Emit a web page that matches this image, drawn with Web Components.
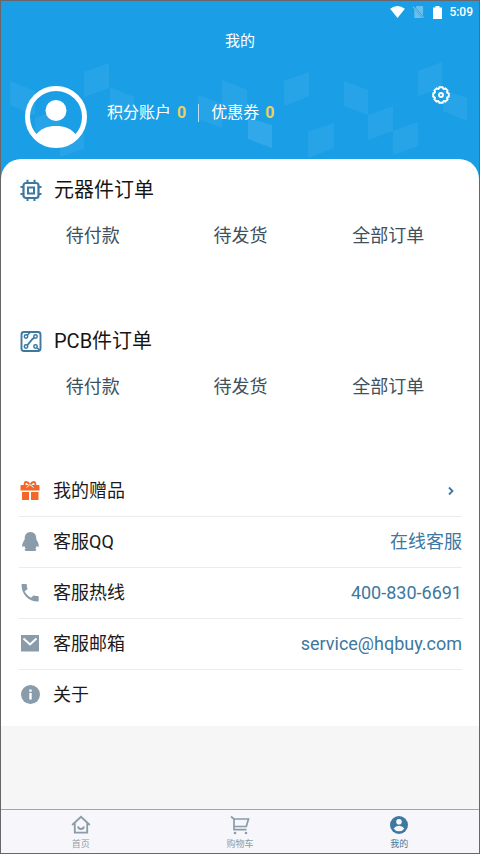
<!DOCTYPE html>
<html lang="zh-CN">
<head>
<meta charset="utf-8">
<meta name="viewport" content="width=device-width, initial-scale=1">
<title>我的</title>
<style>
  html { height: 100%; }
  body {
    margin: 0;
    min-height: 100%;
    display: flex;
    box-sizing: border-box;
    border: 1px solid #69666b;
    background: #f6f6f7;
    font-family: Roboto, "Noto Sans CJK SC", sans-serif;
    color: #1b1b1b;
    --blue: #1a9fe7;
    --accent: #3c78a0;
    --muted: #8a9ca9;
    --line: #ececee;
  }
</style>
</head>
<body>
<account-page></account-page>

<script>
const define = (name, html) => {
  const template = document.createElement('template');
  template.innerHTML = html;
  customElements.define(name, class extends HTMLElement {
    constructor() {
      super();
      this.attachShadow({ mode: 'open' }).append(template.content.cloneNode(true));
    }
  });
};

define('status-bar', `
<style>
  :host { display: flex; justify-content: flex-end; align-items: center; gap: 9px; height: 22px; padding: 0 6px;
    color: #fff; font-size: 12px; font-weight: 500; line-height: 16px; }
  svg { display: block; }
  .wifi { margin-right: -1px; }
  .battery { margin-right: -2px; }
</style>
<svg class="wifi" width="15" height="12" viewBox="0 0 16 13" aria-hidden="true"><path d="M0 3Q8-3 16 3L8 13Z" fill="#fff"/></svg>
<svg width="11" height="12" viewBox="0 0 12 13" aria-hidden="true"><path d="M4 0H11V10.5L3 2ZM1.5 3.5L10 13H1.5Z" fill="#fff" opacity=".35"/><path d="M0 .8L11.5 12.8" stroke="#fff" stroke-width="1.2" opacity=".4"/></svg>
<svg class="battery" width="9" height="13" viewBox="0 0 9 13" aria-hidden="true"><path d="M2.500 0h4v1.500H9V13H0V1.500h2.500z" fill="#fff"/></svg>
<span><slot></slot></span>`);

define('cube-pattern', `
<style>
  :host { position: absolute; inset: 0; }
  svg { display: block; width: 100%; height: 100%; }
</style>
<svg viewBox="0 0 478 178" preserveAspectRatio="xMidYMin slice" fill="#fff" aria-hidden="true">
  <g opacity=".06">
    <path d="M9 80l25 10v24L9 104zM83 71l25-9v25l-25 9zM109 86l24 10v24l-24-9zM34 117l25-9v25l-25 9zM59 141l24-9v16l-24 8zM197 94l24 9v24l-24-9zM221 79l25 10v24l-25-9zM283 80l25-9v24l-25 10zM307 131l26-9v25l-26 10zM343 80l24 9v25l-24-9zM367 114l25-9v25l-25 9zM392 130l25-9v24l-25 9zM417 70l24-9v26l-24 8zM442 89l24 8v23l-24-10z"/>
  </g>
  <path opacity=".1" d="M247 117l24 7v23l-24-9z"/>
</svg>`);

define('user-avatar', `
<style>:host { display: block; } svg { display: block; }</style>
<svg width="64" height="64" viewBox="0 0 64 64" role="img" aria-label="头像">
  <defs><clipPath id="disc"><circle cx="32" cy="32" r="30"/></clipPath></defs>
  <circle cx="32" cy="32" r="28.500" fill="none" stroke="#fff" stroke-width="5"/>
  <circle cx="32" cy="25.500" r="10.500" fill="#fff"/>
  <path clip-path="url(#disc)" d="M11 51C17 43 24 41 32 41s15 2 21 10L47 64H17z" fill="#fff"/>
</svg>`);

define('account-stat', `
<style>
  :host { display: flex; gap: 6px; align-items: center; font-size: 16px; line-height: 20px; color: #fff; white-space: nowrap; }
  b { font-weight: 700; color: #ecd063; }
</style>
<span><slot></slot></span><b><slot name="value"></slot></b>`);

define('profile-header', `
<style>
  :host { display: block; position: relative; background: var(--blue); color: #fff; padding-bottom: 30px; }
  .front { position: relative; }
  h1 { margin: 0; font-size: 15px; font-weight: 400; line-height: 36px; text-align: center; }
  .row { display: flex; align-items: flex-start; padding: 26px 28px 0 23px; }
  .stats { display: flex; align-items: center; gap: 12px; margin: 18px auto 0 19px; }
  .sep { width: 1px; height: 18px; background: #b9e0f7; }
  button { display: block; margin: 0; padding: 0; border: 0; background: none; color: inherit; }
  button svg { display: block; }
</style>
<cube-pattern></cube-pattern>
<div class="front">
  <status-bar>5:09</status-bar>
  <h1>我的</h1>
  <div class="row">
    <user-avatar></user-avatar>
    <div class="stats">
      <account-stat>积分账户<span slot="value">0</span></account-stat>
      <span class="sep"></span>
      <account-stat>优惠券<span slot="value">0</span></account-stat>
    </div>
    <button type="button" aria-label="设置">
      <svg width="20" height="20" viewBox="-10 -10 20 20" fill="none" stroke="#fff" stroke-width="1.900" stroke-linejoin="round">
        <path d="M7.800-1.700V1.700Q4.800 2 6.700 4.400L4.400 6.700Q2 4.800 1.700 7.800H-1.700Q-2 4.800-4.400 6.700L-6.700 4.400Q-4.800 2-7.800 1.700V-1.700Q-4.800-2-6.700-4.400L-4.400-6.700Q-2-4.800-1.700-7.800H1.700Q2-4.800 4.400-6.700L6.700-4.400Q4.800-2 7.800-1.700Z"/>
        <circle r="2"/>
      </svg>
    </button>
  </div>
</div>`);

define('order-section', `
<style>
  :host { display: block; padding: 16px 0 59px; }
  header { display: flex; align-items: center; gap: 12px; height: 30px; margin-bottom: 16px; }
  h2 { margin: 0; font-size: 20px; font-weight: 400; line-height: 30px; color: #151515; }
  nav { display: grid; grid-template-columns: repeat(3, 1fr); }
  button { margin: 0; padding: 0; border: 0; background: none; font: inherit; font-size: 18px; line-height: 30px; color: #40505d; }
</style>
<header><slot name="icon"></slot><h2><slot></slot></h2></header>
<nav>
  <button type="button">待付款</button>
  <button type="button">待发货</button>
  <button type="button">全部订单</button>
</nav>`);

define('menu-row', `
<style>
  :host { display: flex; align-items: center; height: 50px; border-bottom: 1px solid var(--line); font-size: 18px; line-height: 26px; }
  :host(:last-of-type) { border-bottom: 0; }
  .icon { width: 22px; margin-right: 12px; display: flex; }
  .value { margin-left: auto; color: var(--accent); }
  ::slotted(a), ::slotted(button) { color: inherit; text-decoration: none; }
</style>
<span class="icon"><slot name="icon"></slot></span>
<span><slot></slot></span>
<span class="value"><slot name="value"></slot></span>`);

define('tab-item', `
<style>
  :host { flex: 1; color: var(--muted); }
  :host([current]) { color: var(--accent); }
  a { display: flex; flex-direction: column; align-items: center; gap: 2px; padding: 5px 0 2px; font-size: 9px; line-height: 14px; color: inherit; text-decoration: none; }
</style>
<a href="#"><slot name="icon"></slot><span><slot></slot></span></a>`);

define('tab-bar', `
<style>
  :host { display: flex; margin-top: auto; border-top: 1px solid #a5a5a9; background: #f6f6fb; }
  svg { display: block; }
</style>
<tab-item>
  <svg slot="icon" width="20" height="20" viewBox="0 0 20 20" fill="none" stroke="currentColor" stroke-width="1.800" aria-hidden="true"><path d="M1.200 10L10 1.800 18.800 10M3.800 8v9.700h12.400V8M7 11.500Q7.500 14 10 14t3-2.500"/></svg>首页
</tab-item>
<tab-item>
  <svg slot="icon" width="20" height="20" viewBox="0 0 20 20" fill="none" stroke="currentColor" stroke-width="1.700" aria-hidden="true"><path d="M1 1.500L4 4v10.700h12.500M4 4h14.500l-2.200 7.500H4"/><g fill="currentColor" stroke="none"><circle cx="5" cy="18" r="1.300"/><circle cx="16" cy="18" r="1.300"/></g></svg>购物车
</tab-item>
<tab-item current>
  <svg slot="icon" width="20" height="20" viewBox="0 0 20 20" aria-hidden="true"><circle cx="10" cy="10" r="9" fill="currentColor"/><circle cx="10" cy="6.700" r="2.800" fill="#f6f6fb"/><path d="M4.600 13.400Q6.500 10.800 10 10.800t5.400 2.600Q13.500 16.300 10 16.300T4.600 13.400z" fill="#f6f6fb"/></svg>我的
</tab-item>`);

define('account-page', `
<style>
  :host { flex: 1; min-width: 0; display: flex; flex-direction: column; }
  main { position: relative; margin-top: -20px; padding: 0 17px 6px 18px; border-radius: 20px 20px 0 0; background: #fff; }
  .menu { padding-top: 5px; }
  svg { display: block; }
  a { color: inherit; text-decoration: none; }
  button { display: block; margin: 0; padding: 0 7px; border: 0; background: none; color: inherit; }
</style>
<profile-header></profile-header>
<main>
  <order-section>
    <svg slot="icon" width="23" height="23" viewBox="0 0 23 23" fill="none" stroke="#3c78a0" aria-hidden="true"><rect x="4.500" y="4" width="15" height="15" rx="2.500" stroke-width="2.200"/><rect x="9" y="8.500" width="6" height="6" stroke-width="2"/><path d="M8.500 .8v3M15.500 .8v3M8.500 19v3M15.500 19v3M1.500 8h3M1.500 15h3M19.500 8h3M19.500 15h3" stroke-width="2"/></svg>元器件订单
  </order-section>
  <order-section>
    <svg slot="icon" width="23" height="23" viewBox="0 0 23 23" fill="none" stroke="#3c78a0" aria-hidden="true"><rect x="2.500" y="2" width="19" height="19" rx="2.500" stroke-width="1.900"/><g stroke-width="1.500"><circle cx="7" cy="6.500" r="1.700"/><circle cx="16.500" cy="6.500" r="1.700"/><circle cx="7" cy="16.500" r="1.700"/><circle cx="16.500" cy="16.500" r="1.700"/><path stroke-width="1.800" d="M15.200 7.700L13.500 9 8.300 15.300"/><path d="M8.300 5.300L10.800 2.500M18 17.800l2.500 2"/></g></svg>PCB件订单
  </order-section>
  <section class="menu">
    <menu-row>
      <svg slot="icon" width="22" height="22" viewBox="0 0 22 22" aria-hidden="true"><path d="M2.500 5h17a1 1 0 0 1 1 1v4.500h-19V6a1 1 0 0 1 1-1zM3 12h7v8H3zM12 12h7.500v8H12z" fill="#f2672a"/><path d="M10.900 5Q9 1.800 7 2T5.800 5.500M11.100 5Q13 1.800 15 2t1.200 3.500" fill="none" stroke="#f2672a" stroke-width="1.800"/><path d="M7.500 7.500L11 4.500l3.500 3" fill="none" stroke="#fff" stroke-width="1"/></svg>
      我的赠品
      <button slot="value" type="button" aria-label="我的赠品"><svg width="8" height="10" viewBox="0 0 8 10" fill="none" stroke="#3c78a0" stroke-width="1.800"><path d="M2 1.500L5.500 5 2 8.500"/></svg></button>
    </menu-row>
    <menu-row>
      <svg slot="icon" width="22" height="22" viewBox="0 0 22 22" fill="#8a9ca9" aria-hidden="true"><path d="M11.500 1C7.500 1 5.500 3.800 5.700 8.500 4 11 2.900 13.500 3.200 15.500c.3 1 1.300.3 2-.7.3 1.300.8 2.200 1.600 3-1.300.4-1.800 2 .2 2.200h9c2-.2 1.500-1.800.2-2.200.8-.8 1.300-1.700 1.600-3 .7 1 1.700 1.700 2 .7.3-2-.8-4.500-2.500-7C17.500 3.800 15.500 1 11.500 1z"/></svg>
      客服QQ
      <a slot="value" href="#">在线客服</a>
    </menu-row>
    <menu-row>
      <svg slot="icon" width="22" height="22" viewBox="0 0 22 22" fill="#8a9ca9" aria-hidden="true"><path d="M5.600 9.300c1.400 2.800 3.700 5 6.500 6.500l2.100-2.100c.3-.3.700-.4 1-.2 1.100.4 2.300.5 3.500.5.600 0 1 .4 1 1V18.500c0 .6-.4 1-1 1C9.500 19.500 2.500 12 2.500 3c0-.6.400-1 1-1h3.300c.6 0 1 .4 1 1 0 1.200.2 2.400.6 3.500.1.300 0 .7-.2 1z"/></svg>
      客服热线
      <a slot="value" href="tel:400-830-6691">400-830-6691</a>
    </menu-row>
    <menu-row>
      <svg slot="icon" width="22" height="22" viewBox="0 0 22 22" aria-hidden="true"><path d="M2 2h18v16.500H2z" fill="#8a9ca9"/><path d="M4.500 5.500L11 11.500l6.500-6" fill="none" stroke="#fff" stroke-width="2"/></svg>
      客服邮箱
      <a slot="value" href="mailto:service@hqbuy.com">service@hqbuy.com</a>
    </menu-row>
    <menu-row>
      <svg slot="icon" width="22" height="22" viewBox="0 0 22 22" aria-hidden="true"><circle cx="11.500" cy="10.500" r="9.500" fill="#8a9ca9"/><path d="M10.300 9h2.400v6.500h-2.400zM10.300 5.500h2.400v2.200h-2.400z" fill="#fff"/></svg>
      关于
    </menu-row>
  </section>
</main>
<tab-bar></tab-bar>`);
</script>
</body>
</html>
